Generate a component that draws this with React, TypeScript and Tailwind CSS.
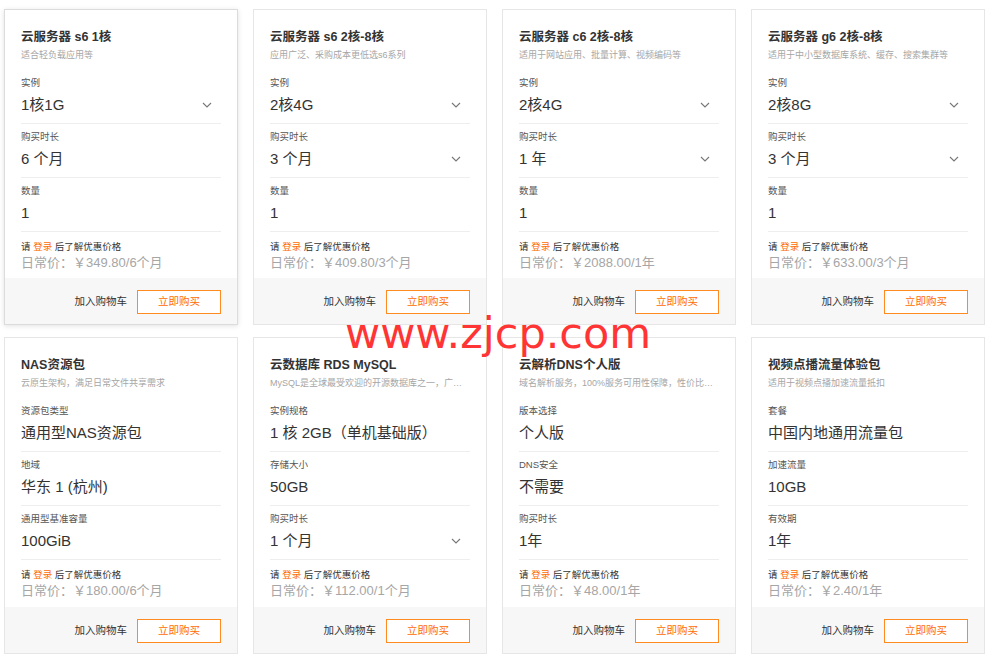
import type { JSX } from 'react';

type Field = { label: string; value: string; select?: boolean };

type Product = {
  title: string;
  desc: string;
  fields: Field[];
  price: string;
  hover?: boolean;
};

const PRODUCTS: Product[] = [
  {
    title: '云服务器 s6 1核',
    desc: '适合轻负载应用等',
    fields: [
      { label: '实例', value: '1核1G', select: true },
      { label: '购买时长', value: '6 个月' },
      { label: '数量', value: '1' },
    ],
    price: '￥349.80/6个月',
    hover: true,
  },
  {
    title: '云服务器 s6 2核-8核',
    desc: '应用广泛、采购成本更低选s6系列',
    fields: [
      { label: '实例', value: '2核4G', select: true },
      { label: '购买时长', value: '3 个月', select: true },
      { label: '数量', value: '1' },
    ],
    price: '￥409.80/3个月',
  },
  {
    title: '云服务器 c6 2核-8核',
    desc: '适用于网站应用、批量计算、视频编码等',
    fields: [
      { label: '实例', value: '2核4G', select: true },
      { label: '购买时长', value: '1 年', select: true },
      { label: '数量', value: '1' },
    ],
    price: '￥2088.00/1年',
  },
  {
    title: '云服务器 g6 2核-8核',
    desc: '适用于中小型数据库系统、缓存、搜索集群等',
    fields: [
      { label: '实例', value: '2核8G', select: true },
      { label: '购买时长', value: '3 个月', select: true },
      { label: '数量', value: '1' },
    ],
    price: '￥633.00/3个月',
  },
  {
    title: 'NAS资源包',
    desc: '云原生架构，满足日常文件共享需求',
    fields: [
      { label: '资源包类型', value: '通用型NAS资源包' },
      { label: '地域', value: '华东 1 (杭州)' },
      { label: '通用型基准容量', value: '100GiB' },
    ],
    price: '￥180.00/6个月',
  },
  {
    title: '云数据库 RDS MySQL',
    desc: 'MySQL是全球最受欢迎的开源数据库之一，广泛应用于各类场景',
    fields: [
      { label: '实例规格', value: '1 核 2GB（单机基础版）' },
      { label: '存储大小', value: '50GB' },
      { label: '购买时长', value: '1 个月', select: true },
    ],
    price: '￥112.00/1个月',
  },
  {
    title: '云解析DNS个人版',
    desc: '域名解析服务，100%服务可用性保障，性价比高，安全稳定',
    fields: [
      { label: '版本选择', value: '个人版' },
      { label: 'DNS安全', value: '不需要' },
      { label: '购买时长', value: '1年' },
    ],
    price: '￥48.00/1年',
  },
  {
    title: '视频点播流量体验包',
    desc: '适用于视频点播加速流量抵扣',
    fields: [
      { label: '套餐', value: '中国内地通用流量包' },
      { label: '加速流量', value: '10GB' },
      { label: '有效期', value: '1年' },
    ],
    price: '￥2.40/1年',
  },
];

function Chevron(): JSX.Element {
  return (
    <svg width="10" height="6" viewBox="0 0 10 6" fill="none" className="shrink-0">
      <path d="M1 1l4 4 4-4" stroke="#777" strokeWidth="1.1" />
    </svg>
  );
}

function ProductCard({ product }: { product: Product }): JSX.Element {
  return (
    <div
      className={`flex h-full flex-col border bg-white ${
        product.hover
          ? 'border-[#dcdcdc] shadow-[0_1px_5px_rgba(0,0,0,0.12)]'
          : 'border-[#e6e6e6]'
      }`}
    >
      <div className="flex-1 px-4 pt-[18px]">
        <div className="text-[12.5px] font-bold leading-[18px] text-[#333]">{product.title}</div>
        <div className="mt-[2px] truncate text-[9px] leading-[14px] text-[#a6a6a6]">
          {product.desc}
        </div>
        <div className="mt-[8px]">
          {product.fields.map((f) => (
            <div key={f.label} className="border-b border-[#eeeeee] pt-[6px] pb-[6px]">
              <div className="text-[9.5px] leading-[14px] text-[#555]">{f.label}</div>
              <div className="mt-[3px] flex h-6 items-center justify-between pr-[9px]">
                <span className="whitespace-nowrap text-[15px] leading-6 text-[#333]">{f.value}</span>
                {f.select && <Chevron />}
              </div>
            </div>
          ))}
        </div>
        <div className="pt-[8px]">
          <div className="text-[9.5px] leading-[14px] text-[#333]">
            请 <span className="text-[#ff6a00]">登录</span> 后了解优惠价格
          </div>
          <div className="mt-0 text-[13px] leading-[18px] text-[#a6a6a6]">
            日常价：{product.price}
          </div>
        </div>
      </div>
      <div className="flex h-[46px] items-center justify-end gap-[10px] bg-[#f7f7f7] pr-4 pt-[2px]">
        <span className="text-[10.5px] text-[#333]">加入购物车</span>
        <span className="flex h-6 w-[84px] items-center justify-center border border-[#ff8a1f] bg-white text-[10.5px] text-[#ff6a00]">
          立即购买
        </span>
      </div>
    </div>
  );
}

export default function App(): JSX.Element {
  return (
    <div
      className="relative h-[666px] w-[1000px] bg-white pl-[4px] pt-[9px]"
      style={{ fontFamily: '"Liberation Sans", "Noto Sans CJK SC", sans-serif' }}
    >
      <div className="grid grid-cols-[repeat(4,234px)] grid-rows-[316px_317px] gap-x-[15px] gap-y-[12px]">
        {PRODUCTS.map((p) => (
          <ProductCard key={p.title} product={p} />
        ))}
      </div>
      <div className="pointer-events-none absolute left-[345px] top-[306px] text-[43px] leading-[54px] text-[#ff3535] [font-family:'DejaVu_Sans',sans-serif]">
        www.zjcp.com
      </div>
    </div>
  );
}
